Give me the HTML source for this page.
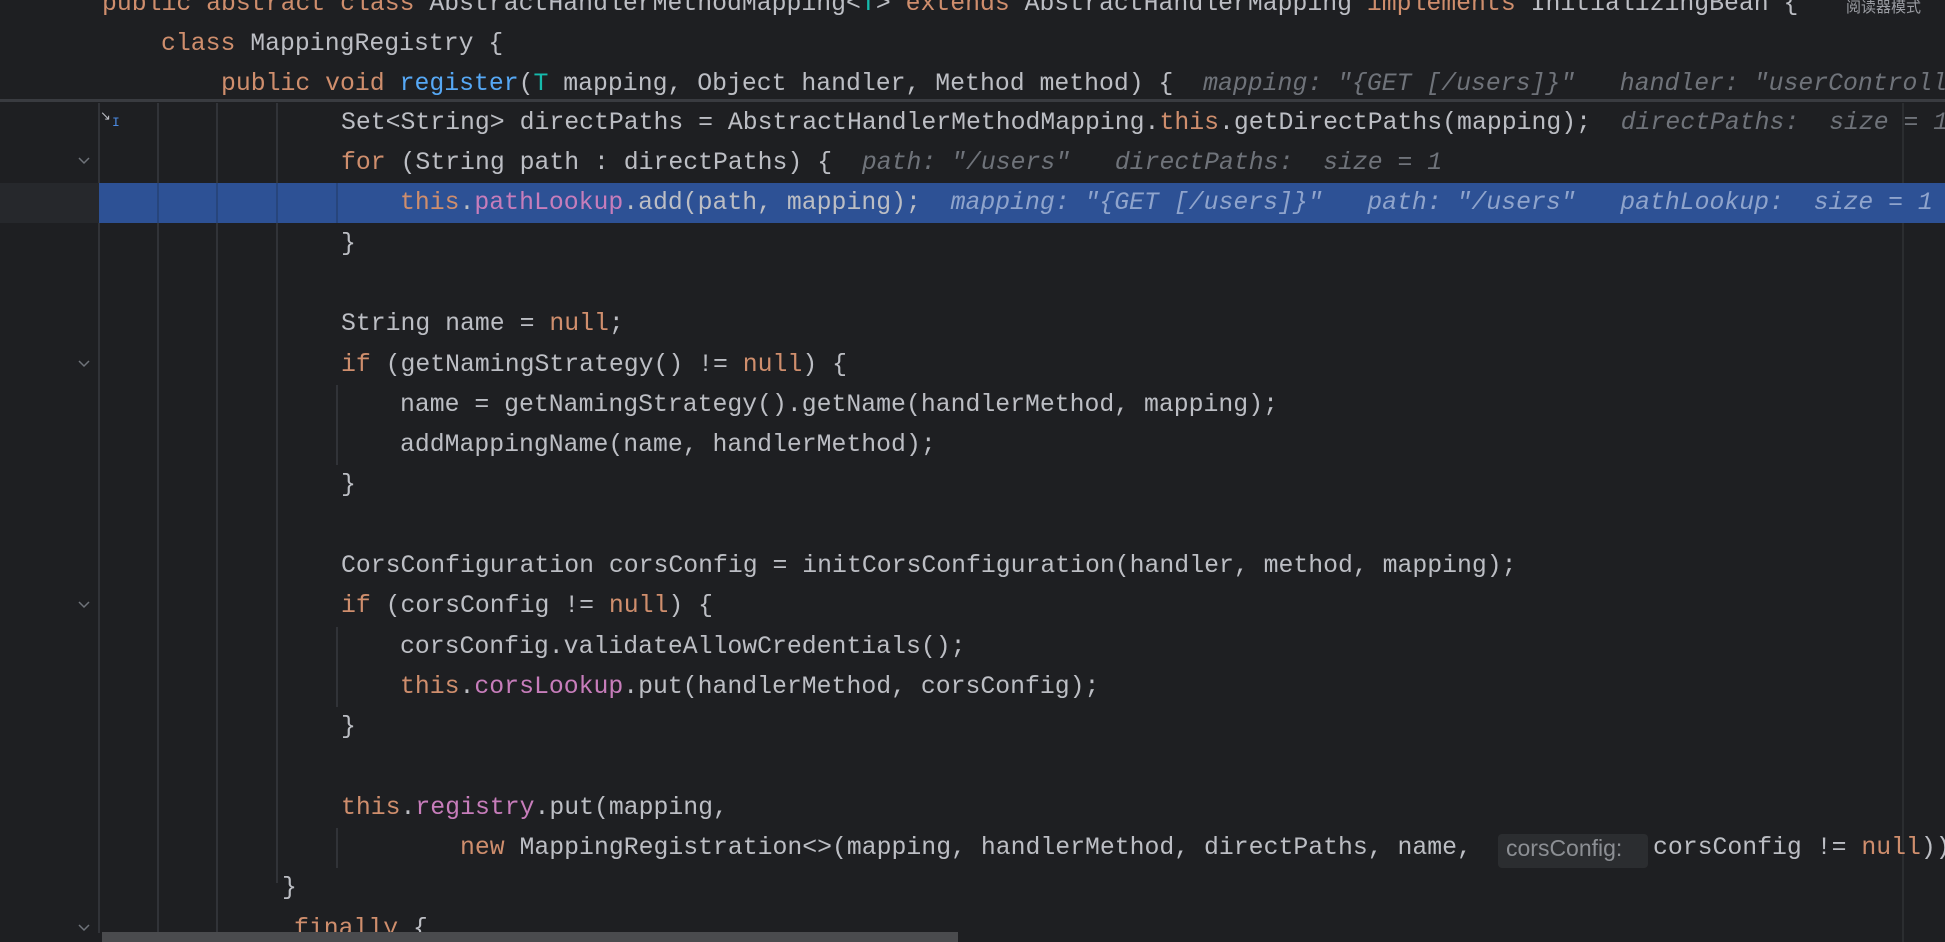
<!DOCTYPE html>
<html><head><meta charset="utf-8"><style>
html,body{margin:0;padding:0;width:1945px;height:942px;overflow:hidden;background:#1e1f22;}
body{position:relative;font-family:"Liberation Mono",monospace;font-size:24.8px;color:#bcbec4;}
.l{position:absolute;left:0;width:1945px;height:40px;line-height:40px;white-space:pre;}
.t{position:absolute;top:0;}
.k{color:#cf8e6d}.m{color:#56a8f5}.f{color:#c77dbb}.tp{color:#16baac}
.h{color:#6f737a;font-style:italic}
.hl{background:#2d5195}
.hl .h{color:#8fa4cc}
.g{position:absolute;width:2px;background:#313338}
.fold{position:absolute;left:78px;width:12px;height:8px}
</style></head><body>
<!-- gutter -->
<div style="position:absolute;left:0;top:0;width:99px;height:942px;background:#1e1f22"></div>
<!-- indent guides -->
<div class="g" style="left:98px;top:103px;height:830px"></div>
<div class="g" style="left:157px;top:103px;height:830px"></div>
<div class="g" style="left:216px;top:103px;height:830px"></div>
<div class="g" style="left:276px;top:103px;height:780px"></div>
<div class="g" style="left:336px;top:385px;height:80px"></div>
<div class="g" style="left:336px;top:627px;height:80px"></div>
<div class="g" style="left:336px;top:828px;height:40px"></div>
<div class="g" style="left:1902px;top:103px;height:839px;background:#2b2d30"></div>

<!-- sticky header -->
<div class="l" style="top:-16px"><span class="t" style="left:102px"><span class="k">public abstract class</span> AbstractHandlerMethodMapping&lt;<span class="tp">T</span>&gt; <span class="k">extends</span> AbstractHandlerMapping <span class="k">implements</span> InitializingBean {</span></div>
<div style="position:absolute;left:1846px;top:-4px;font-family:'Noto Sans CJK SC',sans-serif;font-size:15px;color:#9a9ca2">阅读器模式</div>
<div class="l" style="top:24px"><span class="t" style="left:161px"><span class="k">class</span> MappingRegistry {</span></div>
<div class="l" style="top:64px"><span class="t" style="left:221px"><span class="k">public void</span> <span class="m">register</span>(<span class="tp">T</span> mapping, Object handler, Method method) {  <span class="h">mapping: "{GET [/users]}"   handler: "userController"</span></span></div>
<div style="position:absolute;left:0;top:99px;width:1945px;height:3px;background:#393b40"></div>

<div class="l" style="top:103px"><span class="t" style="left:341px">Set&lt;String&gt; directPaths = AbstractHandlerMethodMapping.<span class="k">this</span>.getDirectPaths(mapping);  <span class="h">directPaths:  size = 1</span></span><span class="t" style="left:100px;top:-6px;font-size:13px;color:#bcbec4">↘</span><span class="t" style="left:112px;top:0px;font-size:13px;color:#4a88e0">I</span></div>
<div class="l" style="top:143px"><span class="t" style="left:341px"><span class="k">for</span> (String path : directPaths) {  <span class="h">path: "/users"   directPaths:  size = 1</span></span></div>
<div class="l hl" style="top:183px;left:99px;width:1846px"><span class="t" style="left:301px"><span class="k">this</span>.<span class="f">pathLookup</span>.add(path, mapping);  <span class="h">mapping: "{GET [/users]}"   path: "/users"   pathLookup:  size = 1</span></span>
<div class="g" style="left:58px;top:0;height:40px;background:#27457c"></div><div class="g" style="left:117px;top:0;height:40px;background:#27457c"></div><div class="g" style="left:177px;top:0;height:40px;background:#27457c"></div><div class="g" style="left:237px;top:0;height:40px;background:#27457c"></div></div>
<div style="position:absolute;left:0;top:183px;width:99px;height:40px;background:#26282c"></div>
<div class="l" style="top:224px"><span class="t" style="left:341px">}</span></div>
<div class="l" style="top:304px"><span class="t" style="left:341px">String name = <span class="k">null</span>;</span></div>
<div class="l" style="top:345px"><span class="t" style="left:341px"><span class="k">if</span> (getNamingStrategy() != <span class="k">null</span>) {</span></div>
<div class="l" style="top:385px"><span class="t" style="left:400px">name = getNamingStrategy().getName(handlerMethod, mapping);</span></div>
<div class="l" style="top:425px"><span class="t" style="left:400px">addMappingName(name, handlerMethod);</span></div>
<div class="l" style="top:465px"><span class="t" style="left:341px">}</span></div>
<div class="l" style="top:546px"><span class="t" style="left:341px">CorsConfiguration corsConfig = initCorsConfiguration(handler, method, mapping);</span></div>
<div class="l" style="top:586px"><span class="t" style="left:341px"><span class="k">if</span> (corsConfig != <span class="k">null</span>) {</span></div>
<div class="l" style="top:627px"><span class="t" style="left:400px">corsConfig.validateAllowCredentials();</span></div>
<div class="l" style="top:667px"><span class="t" style="left:400px"><span class="k">this</span>.<span class="f">corsLookup</span>.put(handlerMethod, corsConfig);</span></div>
<div class="l" style="top:707px"><span class="t" style="left:341px">}</span></div>
<div class="l" style="top:788px"><span class="t" style="left:341px"><span class="k">this</span>.<span class="f">registry</span>.put(mapping,</span></div>
<div style="position:absolute;left:1498px;top:834px;width:150px;height:34px;background:#2b2d30;border-radius:4px"></div>
<div class="l" style="top:828px"><span class="t" style="left:460px"><span class="k">new</span> MappingRegistration&lt;&gt;(mapping, handlerMethod, directPaths, name,</span><span class="t" style="left:1506px;font-family:'Liberation Sans',sans-serif;font-size:23px;color:#8c8f94">corsConfig:</span><span class="t" style="left:1653px">corsConfig != <span class="k">null</span>));</span></div>
<div class="l" style="top:868px"><span class="t" style="left:282px">}</span></div>
<div class="l" style="top:909px"><span class="t" style="left:294px"><span class="k">finally</span> {</span></div>

<!-- fold arrows -->
<svg class="fold" style="top:157px" viewBox="0 0 12 8"><path d="M1 1l5 5 5-5" fill="none" stroke="#6f737a" stroke-width="1.5"/></svg>
<svg class="fold" style="top:360px" viewBox="0 0 12 8"><path d="M1 1l5 5 5-5" fill="none" stroke="#6f737a" stroke-width="1.5"/></svg>
<svg class="fold" style="top:601px" viewBox="0 0 12 8"><path d="M1 1l5 5 5-5" fill="none" stroke="#6f737a" stroke-width="1.5"/></svg>
<svg class="fold" style="top:924px" viewBox="0 0 12 8"><path d="M1 1l5 5 5-5" fill="none" stroke="#6f737a" stroke-width="1.5"/></svg>

<!-- scrollbar -->
<div style="position:absolute;left:102px;top:932px;width:856px;height:10px;background:#4a4b4e"></div>
</body></html>
